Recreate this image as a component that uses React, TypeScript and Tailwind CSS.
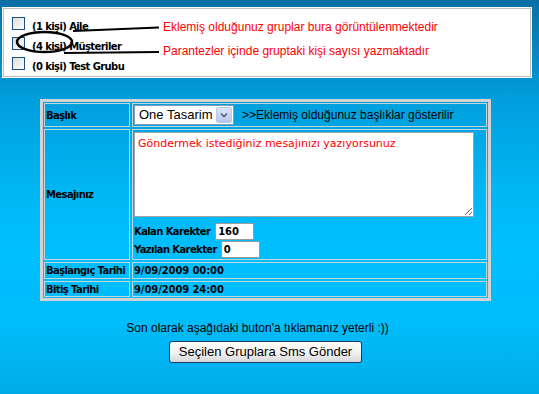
import React from "react";

const groups = [
  { count: 1, name: "Aile" },
  { count: 4, name: "Müşteriler" },
  { count: 0, name: "Test Grubu" },
];

function CheckBox() {
  return (
    <span className="block w-[13px] h-[13px] shrink-0 border border-[#1c5180] bg-[linear-gradient(135deg,#dcdcd7,#ffffff)]" />
  );
}

function Label({ children }: { children: React.ReactNode }) {
  return (
    <span className="font-['DejaVu_Sans',Verdana,sans-serif] font-bold text-[10px] tracking-[-0.6px] text-black whitespace-nowrap">
      {children}
    </span>
  );
}

function Value({ children }: { children: React.ReactNode }) {
  return (
    <span className="font-['DejaVu_Sans',Verdana,sans-serif] font-bold text-[10px] tracking-[-0.1px] text-black whitespace-nowrap">
      {children}
    </span>
  );
}

const cell = "border border-[#c5d5e0] p-px";

export default function App() {
  return (
    <div className="relative w-[539px] h-[394px] overflow-hidden bg-[linear-gradient(180deg,#0b6ea5_0px,#009fdc_100px,#00b6f3_190px,#00bfff_250px,#00bdfc_320px,#00ace6_394px)] font-['Liberation_Sans',Arial,sans-serif]">
      {/* groups box */}
      <div className="pt-[7px] pl-[2px]">
        <div className="w-[530px] h-[71px] bg-white p-px">
          <div className="h-full border border-[#c0c0c0] pl-[8px] pt-[8px] flex flex-col gap-[7px]">
            {groups.map((g) => (
              <div key={g.name} className="flex items-center h-[13px]">
                <CheckBox />
                <span className="ml-[7px] mt-[2px]">
                  <Label>
                    ({g.count} kişi) {g.name}
                  </Label>
                </span>
              </div>
            ))}
          </div>
        </div>
      </div>

      {/* message form */}
      <div className="ml-[40px] mt-[21px] w-[451px]">
        <div className="border-[3px] border-[#d3d3d3] p-px grid grid-cols-[86px_355px] grid-rows-[24px_131px_17px_16px] gap-[2px]">
          <div className={`${cell} flex items-center`}>
            <Label>Başlık</Label>
          </div>
          <div className={`${cell} flex items-center`}>
            <div className="flex h-[20px] w-[100px] border border-[#7f9db9] bg-white">
              <span className="flex-1 pl-[4px] text-[13px] leading-[18px] text-black">One Tasarim</span>
              <span className="w-[16px] m-px flex items-center justify-center rounded-[2px] border border-[#b8c8e8] bg-[linear-gradient(180deg,#dbe5fa,#b7c8ea)]">
                <svg width="8" height="6" viewBox="0 0 8 6">
                  <path d="M1 1.5 L4 4.5 L7 1.5" fill="none" stroke="#4d6185" strokeWidth="1.6" />
                </svg>
              </span>
            </div>
            <span className="ml-[8px] text-[12px] text-black whitespace-nowrap">
              &gt;&gt;Eklemiş olduğunuz başlıklar gösterilir
            </span>
          </div>

          <div className={`${cell} flex items-center`}>
            <Label>Mesajınız</Label>
          </div>
          <div className={`${cell} flex flex-col`}>
            <textarea
              className="mt-px w-[340px] h-[85px] border border-[#a0a4a8] bg-white px-[3px] pt-[4px] font-['DejaVu_Sans',Verdana,sans-serif] text-[11px] leading-[14px] text-[#ff0000] outline-none"
              defaultValue="Göndermek istediğiniz mesajınızı yazıyorsunuz"
            />
            <div className="mt-[6px] flex items-center h-[17px]">
              <Label>Kalan Karekter</Label>
              <span className="ml-[5px] w-[39px] h-[17px] border border-[#9a9a9a] bg-white pl-[2px] flex items-center">
                <Value>160</Value>
              </span>
            </div>
            <div className="mt-px flex items-center h-[17px]">
              <Label>Yazılan Karekter</Label>
              <span className="ml-[4px] w-[39px] h-[17px] border border-[#9a9a9a] bg-white pl-[2px] flex items-center">
                <Value>0</Value>
              </span>
            </div>
          </div>

          <div className={`${cell} flex items-center`}>
            <Label>Başlangıç Tarihi</Label>
          </div>
          <div className={`${cell} flex items-center`}>
            <Value>9/09/2009 00:00</Value>
          </div>

          <div className={`${cell} flex items-center`}>
            <Label>Bitiş Tarihi</Label>
          </div>
          <div className={`${cell} flex items-center`}>
            <Value>9/09/2009 24:00</Value>
          </div>
        </div>

        <p className="mt-[20px] pr-[16px] text-center text-[12px] leading-[14px] text-black">
          Son olarak aşağıdaki buton'a tıklamanız yeterli :))
        </p>
        <div className="mt-[6px] flex justify-center">
          <button className="w-[193px] h-[22px] rounded-[3px] border border-[#1f3b66] bg-[linear-gradient(180deg,#ffffff_0%,#f3f3f0_50%,#d8d8dc_100%)] text-[13px] text-black">
            Seçilen Gruplara Sms Gönder
          </button>
        </div>
      </div>

      {/* annotations */}
      <span className="absolute left-[163px] top-[20px] text-[12px] leading-[14px] text-[#ff0000] whitespace-nowrap">
        Eklemiş olduğunuz gruplar bura görüntülenmektedir
      </span>
      <span className="absolute left-[163px] top-[44px] text-[12px] leading-[14px] text-[#ff0000] whitespace-nowrap">
        Parantezler içinde gruptaki kişi sayısı yazmaktadır
      </span>
      <svg className="absolute left-0 top-0 pointer-events-none" width="539" height="394">
        <ellipse cx="44.5" cy="42" rx="27.5" ry="10" fill="none" stroke="#000" strokeWidth="2.5" />
        <path d="M73 31 L159 27.5" stroke="#000" strokeWidth="2" />
        <path d="M64 53 L159 52" stroke="#000" strokeWidth="2" />
      </svg>
    </div>
  );
}
